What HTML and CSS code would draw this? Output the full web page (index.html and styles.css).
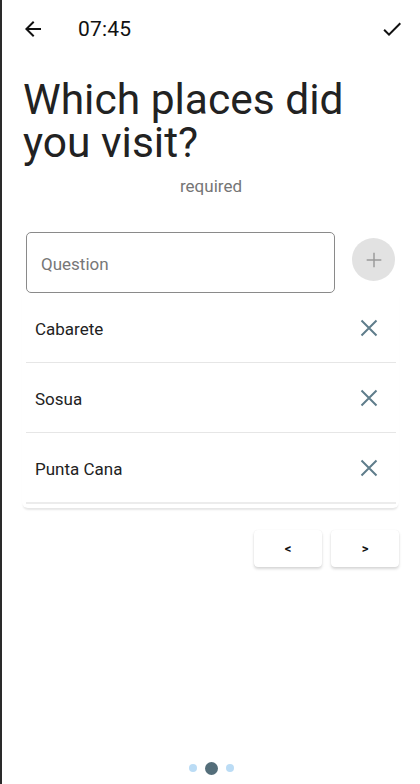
FILE: index.html
```html
<!DOCTYPE html>
<html>
<head>
<meta charset="utf-8">
<link rel="stylesheet" href="styles.css">
</head>
<body>
<div class="screen">
  <header class="topbar">
    <svg class="icon back" viewBox="0 0 24 24" width="24" height="24"><path d="M20 11H7.83l5.59-5.59L12 4l-8 8 8 8 1.41-1.41L7.83 13H20v-2z" fill="#111"/></svg>
    <span class="time">07:45</span>
    <span class="spacer"></span>
    <svg class="icon check" viewBox="0 0 24 24" width="24" height="24"><path d="M9 16.170L4.83 12l-1.42 1.41L9 19 21 7l-1.41-1.41z" fill="#111"/></svg>
  </header>

  <h1 class="title">Which places did you visit?</h1>
  <div class="required">required</div>

  <div class="entry">
    <div class="field"><span class="placeholder">Question</span></div>
    <div class="add">
      <svg viewBox="0 0 24 24" width="22" height="22"><path d="M12 4v16M4 12h16" stroke="#9a9a9a" stroke-width="1.6" fill="none"/></svg>
    </div>
  </div>

  <div class="list">
    <div class="item"><span class="label">Cabarete</span><svg class="x" viewBox="0 0 24 24" width="24" height="24"><path d="M4.5 4.5l15 15M19.5 4.5l-15 15" stroke="#5f7d8b" stroke-width="2" fill="none"/></svg></div>
    <div class="item"><span class="label">Sosua</span><svg class="x" viewBox="0 0 24 24" width="24" height="24"><path d="M4.5 4.5l15 15M19.5 4.5l-15 15" stroke="#5f7d8b" stroke-width="2" fill="none"/></svg></div>
    <div class="item last"><span class="label">Punta Cana</span><svg class="x" viewBox="0 0 24 24" width="24" height="24"><path d="M4.5 4.5l15 15M19.5 4.5l-15 15" stroke="#5f7d8b" stroke-width="2" fill="none"/></svg></div>
  </div>

  <div class="nav">
    <button class="navbtn">&lt;</button>
    <button class="navbtn">&gt;</button>
  </div>

  <div class="grow"></div>

  <div class="dots">
    <span class="dot"></span>
    <span class="dot active"></span>
    <span class="dot"></span>
  </div>
</div>
</body>
</html>
```

FILE: styles.css
```css
html, body {
  margin: 0;
  padding: 0;
  background: #fff;
}
body {
  font-family: Roboto, "Noto Sans", sans-serif;
  color: #212121;
}
.screen {
  width: 418px;
  height: 784px;
  border-left: 2px solid #2a2a2a;
  display: flex;
  flex-direction: column;
  box-sizing: content-box;
}
.topbar {
  display: flex;
  align-items: center;
  height: 58px;
  padding: 0 16px 0 19px;
}
.time {
  font-size: 21px;
  color: #111;
  margin-left: 33px;
  letter-spacing: 0.2px;
}
.spacer { flex: 1; }
.title {
  margin: 20px 0 0 21px;
  font-size: 42.5px;
  font-weight: 400;
  line-height: 43px;
  color: #222;
  width: 380px;
}
.required {
  text-align: center;
  font-size: 17px;
  color: #757575;
  margin-top: 12px;
}
.entry {
  display: flex;
  align-items: flex-start;
  margin: 36px 0 0 24px;
}
.field {
  width: 293px;
  height: 59px;
  border: 1px solid #8a8a8a;
  border-radius: 5px;
  display: flex;
  align-items: center;
  padding-left: 14px;
  box-sizing: content-box;
}
.placeholder {
  font-size: 17px;
  color: #777;
  margin-top: 3px;
}
.add {
  width: 43px;
  height: 43px;
  border-radius: 50%;
  background: #e2e2e2;
  margin-left: 17px;
  margin-top: 6px;
  display: flex;
  align-items: center;
  justify-content: center;
}
.list {
  margin: 0 21px 0 20px;
  box-shadow: 0 3px 2px -1px rgba(0,0,0,0.10);
  border-radius: 0 0 6px 6px;
  padding: 0 3px 4px 4px;
}
.item {
  display: flex;
  align-items: center;
  justify-content: space-between;
  height: 69px;
  border-bottom: 1px solid #e6e6e6;
  padding: 0 15px 0 9px;
  font-size: 17px;
  color: #222;
}
.label {
  margin-top: 2px;
}
.item.last {
  border-bottom: 2px solid #ececec;
}
.nav {
  display: flex;
  justify-content: flex-end;
  gap: 9px;
  margin: 22px 21px 0 0;
}
.navbtn {
  width: 68px;
  height: 37px;
  border: none;
  background: #fff;
  border-radius: 4px;
  box-shadow: 0 2px 3px rgba(0,0,0,0.16), 0 0 1px rgba(0,0,0,0.08);
  font-family: Roboto, sans-serif;
  font-weight: 700;
  font-size: 13px;
  color: #111;
}
.grow { flex: 1; }
.dots {
  display: flex;
  justify-content: center;
  align-items: center;
  gap: 8px;
  height: 30px;
  margin-bottom: 1px;
}
.dot {
  width: 8px;
  height: 8px;
  border-radius: 50%;
  background: #bbdcf5;
}
.dot.active {
  width: 13px;
  height: 13px;
  background: #546e7a;
}
```
